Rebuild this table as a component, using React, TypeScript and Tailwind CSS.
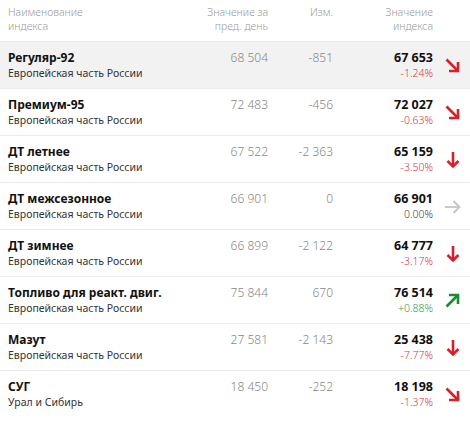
import React from "react";

type Trend = "down" | "downRight" | "flat" | "upRight";

interface Row {
  name: string;
  region: string;
  prev: string;
  change: string;
  value: string;
  pct: string;
  trend: Trend;
}

const rows: Row[] = [
  { name: "Регуляр-92", region: "Европейская часть России", prev: "68 504", change: "-851", value: "67 653", pct: "-1.24%", trend: "downRight" },
  { name: "Премиум-95", region: "Европейская часть России", prev: "72 483", change: "-456", value: "72 027", pct: "-0.63%", trend: "downRight" },
  { name: "ДТ летнее", region: "Европейская часть России", prev: "67 522", change: "-2 363", value: "65 159", pct: "-3.50%", trend: "down" },
  { name: "ДТ межсезонное", region: "Европейская часть России", prev: "66 901", change: "0", value: "66 901", pct: "0.00%", trend: "flat" },
  { name: "ДТ зимнее", region: "Европейская часть России", prev: "66 899", change: "-2 122", value: "64 777", pct: "-3.17%", trend: "down" },
  { name: "Топливо для реакт. двиг.", region: "Европейская часть России", prev: "75 844", change: "670", value: "76 514", pct: "+0.88%", trend: "upRight" },
  { name: "Мазут", region: "Европейская часть России", prev: "27 581", change: "-2 143", value: "25 438", pct: "-7.77%", trend: "down" },
  { name: "СУГ", region: "Урал и Сибирь", prev: "18 450", change: "-252", value: "18 198", pct: "-1.37%", trend: "downRight" },
];

const TrendIcon = ({ trend }: { trend: Trend }) => {
  if (trend === "down")
    return (
      <svg width="14" height="18" viewBox="0 0 14 18" fill="none" stroke="#d6212b" strokeWidth="2.6">
        <path d="M7 1 V16" />
        <path d="M1.5 10 L7 15.5 L12.5 10" />
      </svg>
    );
  if (trend === "flat")
    return (
      <svg width="17" height="16" viewBox="0 0 17 16" fill="none" stroke="#c4c4c4" strokeWidth="1.8">
        <path d="M1 8 H15.5" />
        <path d="M9.5 2 L15.5 8 L9.5 14" />
      </svg>
    );
  if (trend === "upRight")
    return (
      <svg width="15" height="15" viewBox="0 0 15 15" fill="none" stroke="#1e8a30" strokeWidth="2.6">
        <path d="M1.5 13.5 L13 2" />
        <path d="M4 2 H13 V11" />
      </svg>
    );
  return (
    <svg width="15" height="15" viewBox="0 0 15 15" fill="none" stroke="#d6212b" strokeWidth="2.6">
      <path d="M1.5 1.5 L13 13" />
      <path d="M13 4 V13 H4" />
    </svg>
  );
};

const pctColor = (t: Trend) =>
  t === "flat" ? "text-[#444]" : t === "upRight" ? "text-[#3c9a48]" : "text-[#d8344a]";

export default function App() {
  return (
    <div className="w-[470px] h-[421px] bg-white overflow-hidden font-['Noto_Sans',sans-serif]">
      <div className="grid grid-cols-[1fr_80px_65px_100px_37px] h-[41px] pt-[5px] text-[10.5px] leading-[14px] text-[#9a9a9a] font-light">
        <div className="pl-2">
          Наименование
          <br />
          индекса
        </div>
        <div className="text-right">
          Значение за
          <br />
          пред. день
        </div>
        <div className="text-right">Изм.</div>
        <div className="text-right">
          Значение
          <br />
          индекса
        </div>
        <div />
      </div>
      {rows.map((r, i) => (
        <div
          key={r.name}
          className={`grid grid-cols-[1fr_80px_65px_100px_37px] h-[47px] border-t border-[#ebebeb] pt-[7px] ${
            i === 0 ? "bg-[#f2f2f2]" : "bg-white"
          }`}
        >
          <div className="pl-2">
            <div className="text-[12px] leading-[17px] font-bold text-[#111]">{r.name}</div>
            <div className="text-[10.5px] leading-[15px] text-[#333]">{r.region}</div>
          </div>
          <div className="text-right text-[12px] leading-[17px] font-light text-[#888]">{r.prev}</div>
          <div className="text-right text-[12px] leading-[17px] font-light text-[#888]">{r.change}</div>
          <div className="text-right">
            <div className="text-[12.5px] leading-[17px] font-bold text-[#111]">{r.value}</div>
            <div className={`text-[10.5px] leading-[15px] font-light ${pctColor(r.trend)}`}>{r.pct}</div>
          </div>
          <div className="flex items-center justify-center pb-[6px] pl-[2px]">
            <TrendIcon trend={r.trend} />
          </div>
        </div>
      ))}
    </div>
  );
}
